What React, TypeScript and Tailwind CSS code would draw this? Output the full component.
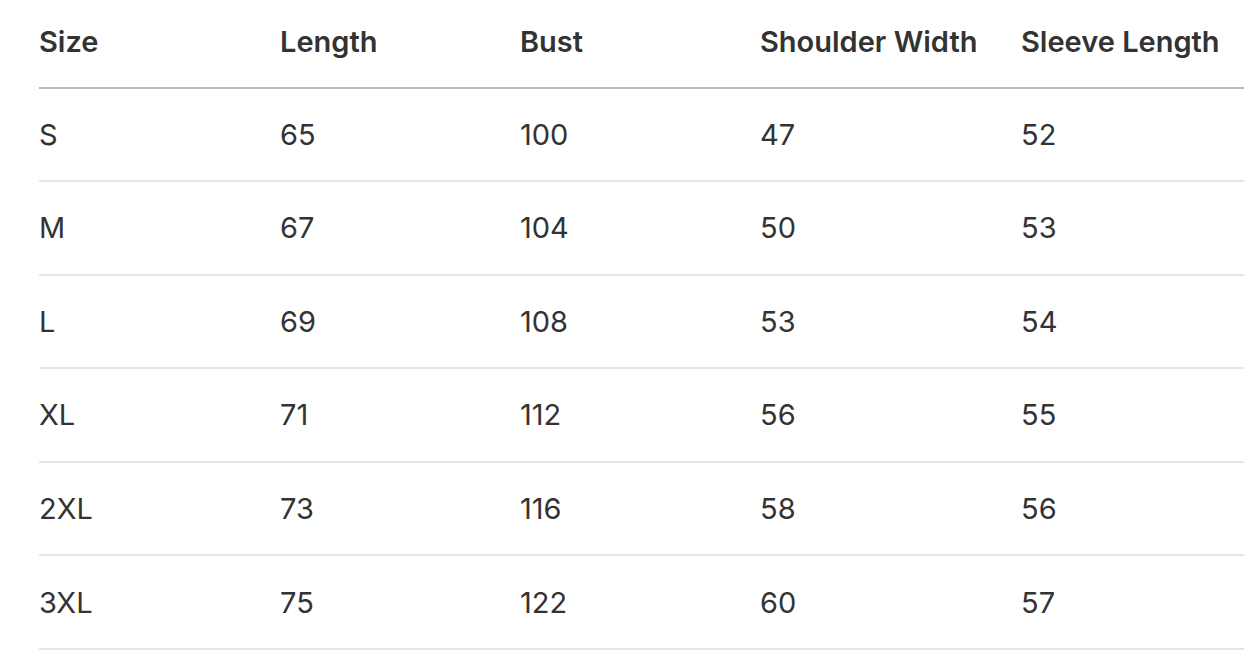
import React from "react";

const rows = [
  ["S", "65", "100", "47", "52"],
  ["M", "67", "104", "50", "53"],
  ["L", "69", "108", "53", "54"],
  ["XL", "71", "112", "56", "55"],
  ["2XL", "73", "116", "58", "56"],
  ["3XL", "75", "122", "60", "57"],
];

const headers = ["Size", "Length", "Bust", "Shoulder Width", "Sleeve Length"];
const widths = ["w-[241px]", "w-[240px]", "w-[240px]", "w-[261px]", "w-[223px]"];

export default function App() {
  return (
    <div className="min-h-[656px] bg-white pl-[39px] text-[#333333] font-['Inter','Liberation_Sans',sans-serif]">
      <table className="w-[1205px] border-collapse table-fixed">
        <thead>
          <tr className="h-[87.5px] border-b-2 border-[#b9b9b9]">
            {headers.map((h, i) => (
              <th
                key={h}
                className={`${widths[i]} p-0 text-left align-middle text-[29px] font-semibold pb-[4px]`}
              >
                {h}
              </th>
            ))}
          </tr>
        </thead>
        <tbody>
          {rows.map((r) => (
            <tr key={r[0]} className="h-[93.6px] border-b-2 border-[#e5e5e5]">
              {r.map((c, i) => (
                <td key={i} className="p-0 text-left align-middle text-[29px] font-normal">
                  {c}
                </td>
              ))}
            </tr>
          ))}
        </tbody>
      </table>
    </div>
  );
}
